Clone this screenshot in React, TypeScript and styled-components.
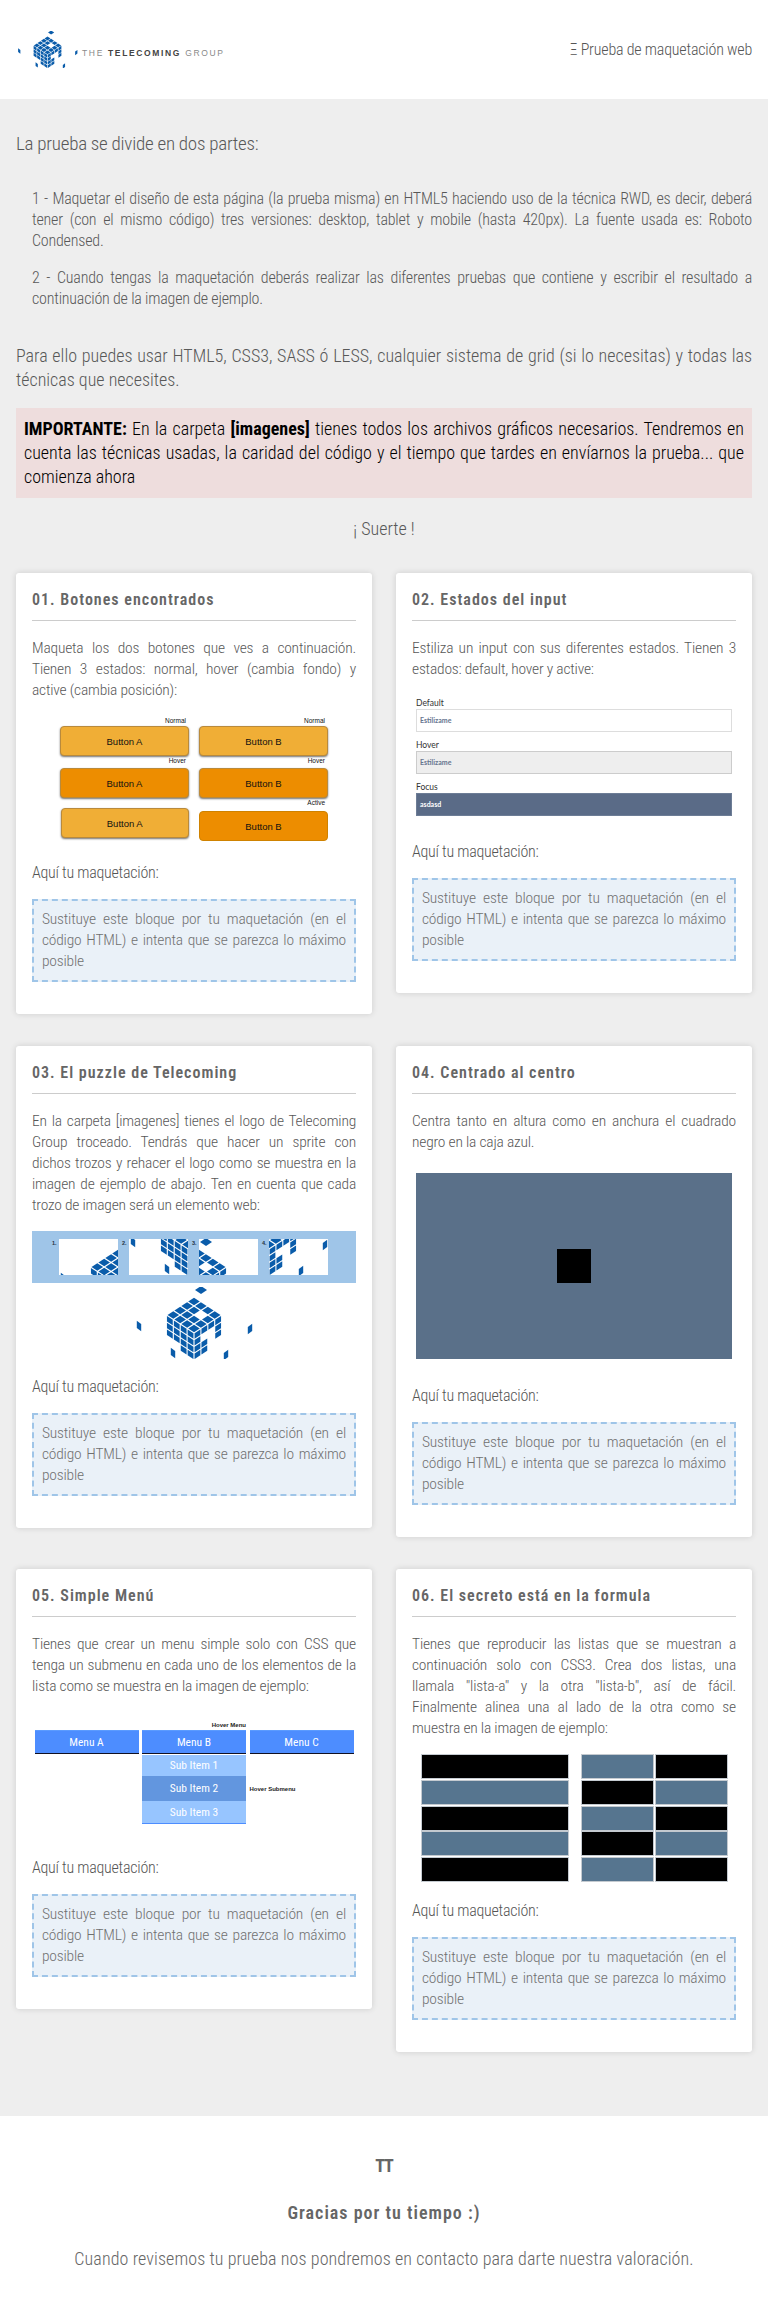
import React from 'react';
import styled, { createGlobalStyle } from 'styled-components';

/*
 * Types
 */
type ButtonState = 'normal' | 'hover' | 'active';
type Point = [number, number];

/*
 * Logo geometry
 */
const R: Point = [6.9, 4.5];
const L: Point = [-6.9, 4.5];
const UP: Point = [6.9, -4.5];
const D: Point = [0, 6.75];

const face = (origin: Point, a: Point, b: Point, missing: string[]) => {
    const cells: string[] = [];
    for (let i = 0; i < 4; i++) {
        for (let j = 0; j < 4; j++) {
            if (missing.includes(`${i},${j}`)) continue;
            const p = (u: number, v: number) =>
                `${origin[0] + (i + u) * a[0] + (j + v) * b[0]},${origin[1] + (i + u) * a[1] + (j + v) * b[1]}`;
            cells.push([p(0.08, 0.08), p(0.92, 0.08), p(0.92, 0.92), p(0.08, 0.92)].join(' '));
        }
    }
    return cells;
};

const loose = (c: Point, a: Point, b: Point) =>
    [
        `${c[0] - a[0] - b[0]},${c[1] - a[1] - b[1]}`,
        `${c[0] + a[0] - b[0]},${c[1] + a[1] - b[1]}`,
        `${c[0] + a[0] + b[0]},${c[1] + a[1] + b[1]}`,
        `${c[0] - a[0] + b[0]},${c[1] - a[1] + b[1]}`,
    ].join(' ');

const logoCells = [
    ...face([0, 0], R, L, ['2,1']),
    ...face([-27.6, 18], R, D, ['0,3', '1,3']),
    ...face([0, 36], UP, D, ['1,1', '2,1', '2,2', '2,3', '3,3']),
    loose([7, -7], [3, 2], [-3, 2]),
    loose([-55, 29], [2.2, 1.6], [0, 3.6]),
    loose([56, 32], [2.2, -1.6], [0, 3.6]),
    loose([32, 58], [2.2, -1.6], [0, 3.6]),
    loose([-21, 56], [2.2, 1.6], [0, 3.6]),
];

/*
 * Styling
 */
const GlobalStyle = createGlobalStyle`
    html, body {
        margin: 0;
        padding: 0;
        background: #eeeeee;
    }
    body {
        font-family: "Roboto Condensed", Roboto, "Liberation Sans", sans-serif;
        font-stretch: 75%;
        color: #585858;
    }
    * {
        box-sizing: border-box;
    }
`;

const Header = styled.header`
    display: flex;
    align-items: center;
    justify-content: space-between;
    height: 99px;
    padding: 0 16px 0 17px;
    background: #ffffff;
`;

const Brand = styled.div`
    display: flex;
    align-items: center;
    gap: 4px;
`;

const BrandName = styled.span`
    font-family: "Liberation Sans", sans-serif;
    font-stretch: normal;
    font-size: 8.5px;
    letter-spacing: 1.65px;
    color: #8a8a8a;
    padding-top: 6px;

    b {
        color: #444444;
    }
`;

const HeaderTitle = styled.div`
    font-size: 16px;
    font-weight: 350;
    letter-spacing: -0.2px;
    color: #555555;
`;

const Main = styled.main`
    padding: 32px 16px 64px;
`;

const Lead = styled.p`
    margin: 0 0 31px;
    font-size: 19px;
    font-weight: 350;
    letter-spacing: -0.25px;
    line-height: 26px;
`;

const Steps = styled.div`
    padding-left: 16px;
`;

const Step = styled.p`
    margin: 0 0 16px;
    font-size: 16px;
    font-weight: 350;
    letter-spacing: -0.2px;
    line-height: 21px;
    text-align: justify;
`;

const Tools = styled.p`
    margin: 35px 0 16px;
    font-size: 18px;
    font-weight: 350;
    line-height: 24px;
    text-align: justify;
`;

const Notice = styled.p`
    margin: 0;
    padding: 9px 8px;
    background: #eedddd;
    color: #000000;
    font-size: 18px;
    font-weight: 350;
    line-height: 24px;
    text-align: justify;

    b {
        font-weight: 700;
    }
`;

const Luck = styled.p`
    margin: 19px 0 32px;
    font-size: 18px;
    font-weight: 350;
    line-height: 24px;
    text-align: center;
`;

const Cards = styled.div`
    display: grid;
    grid-template-columns: 356px 356px;
    column-gap: 24px;
    row-gap: 32px;
    align-items: start;
`;

const Card = styled.section`
    padding: 16px 16px 32px;
    background: #ffffff;
    border-radius: 3px;
    box-shadow: 0 0 6px rgba(0, 0, 0, 0.14);
`;

const CardTitle = styled.h2`
    margin: 0 0 17px;
    padding-bottom: 9px;
    border-bottom: 1px solid #cccccc;
    font-size: 16px;
    font-weight: 600;
    font-stretch: 100%;
    letter-spacing: 1px;
    line-height: 22px;
    color: #666666;
`;

const CardText = styled.p`
    margin: 0;
    font-size: 15.5px;
    font-weight: 350;
    letter-spacing: -0.2px;
    line-height: 21px;
    text-align: justify;
`;

const YourTurn = styled.p`
    margin: 0 0 16px;
    font-size: 16px;
    font-weight: 350;
    letter-spacing: -0.25px;
    line-height: 21px;
    color: #555555;
`;

const Placeholder = styled.div`
    padding: 8px;
    border: 2px dashed #9fc5e8;
    background: #eaf1f8;
    font-size: 15.5px;
    font-weight: 350;
    letter-spacing: -0.2px;
    line-height: 21px;
    text-align: justify;
    color: #707070;
`;

/* 01 */
const ButtonsDemo = styled.div`
    display: grid;
    grid-template-columns: 129px 129px;
    justify-content: center;
    column-gap: 10px;
    height: 161px;
    padding-top: 15px;
`;

const ButtonColumn = styled.div`
    display: flex;
    flex-direction: column;
`;

const StateLabel = styled.span<{ $height: number }>`
    height: ${(p) => p.$height}px;
    padding-right: 3px;
    font-family: "Liberation Sans", sans-serif;
    font-stretch: normal;
    font-size: 6.5px;
    line-height: 10px;
    text-align: right;
    color: #111111;
`;

const DemoButton = styled.div<{ $state: ButtonState; $pressed?: boolean }>`
    display: flex;
    align-items: center;
    justify-content: center;
    height: 30px;
    margin-left: ${(p) => (p.$pressed ? '0.5px' : '0')};
    margin-top: ${(p) => (p.$pressed ? '10px' : '0')};
    border: 1px solid ${(p) => (p.$state === 'active' ? '#cf8200' : '#b98a3c')};
    border-radius: 4px;
    background: ${(p) => (p.$state === 'normal' ? '#f0ae36' : '#ed8d00')};
    box-shadow: ${(p) => (p.$state === 'active' ? 'none' : '0 1px 2px rgba(0, 0, 0, 0.55)')};
    font-family: "Liberation Sans", sans-serif;
    font-stretch: normal;
    font-size: 9.5px;
    color: #111111;
`;

/* 02 */
const InputsDemo = styled.div`
    display: flex;
    flex-direction: column;
    gap: 8px;
    height: 161px;
    padding: 18px 4px 0;
`;

const InputGroup = styled.div`
    display: flex;
    flex-direction: column;
`;

const InputLabel = styled.label`
    height: 11px;
    font-family: Lato, sans-serif;
    font-stretch: normal;
    font-size: 8.5px;
    line-height: 10px;
    color: #333333;
`;

const FakeInput = styled.div<{ $bg: string; $border: string; $color: string }>`
    height: 23px;
    padding: 0 3px;
    border: 1.5px solid ${(p) => p.$border};
    background: ${(p) => p.$bg};
    font-family: Lato, sans-serif;
    font-stretch: normal;
    font-size: 7px;
    font-weight: 700;
    line-height: 20px;
    color: ${(p) => p.$color};
`;

/* 03 */
const SpriteBand = styled.div`
    display: flex;
    gap: 4px;
    height: 52px;
    margin-top: 15px;
    padding: 8px 0 0 20px;
    background: #9fc5e8;
`;

const Sprite = styled.div`
    display: flex;
    width: 66px;
`;

const SpriteNumber = styled.span`
    width: 7px;
    font-family: "Liberation Sans", sans-serif;
    font-stretch: normal;
    font-size: 5.5px;
    font-weight: 700;
    line-height: 8px;
    color: #223344;
`;

const SpriteTile = styled.svg`
    display: block;
    width: 59px;
    height: 36px;
    background: #ffffff;
`;

const PuzzleLogo = styled.svg`
    display: block;
    width: 118px;
    height: 72px;
    margin: 4px auto 17px;
`;

/* 04 */
const CenterBox = styled.div`
    display: flex;
    align-items: center;
    justify-content: center;
    height: 186px;
    margin: 20px 4px 26px;
    background: #5a7089;
`;

const CenterSquare = styled.div`
    width: 34px;
    height: 34px;
    background: #000000;
`;

/* 05 */
const MenuDemo = styled.div`
    display: grid;
    grid-template-columns: repeat(3, 104px);
    grid-template-rows: 11px 24px auto;
    justify-content: center;
    align-content: start;
    column-gap: 3.5px;
    height: 160px;
    padding-top: 22px;
`;

const MenuNote = styled.span<{ $col: number; $left?: boolean }>`
    grid-column: ${(p) => p.$col};
    align-self: center;
    font-family: "Liberation Sans", sans-serif;
    font-stretch: normal;
    font-size: 6px;
    font-weight: 700;
    color: #222222;
    text-align: ${(p) => (p.$left ? 'left' : 'right')};
`;

const MenuItem = styled.div<{ $col: number }>`
    grid-column: ${(p) => p.$col};
    grid-row: 2;
    height: 24px;
    border-top: 1px solid #5b9bff;
    border-bottom: 1.5px solid #111122;
    background: #4d8dff;
    color: #ffffff;
    font-size: 11.5px;
    line-height: 22px;
    text-align: center;
`;

const SubMenu = styled.div`
    grid-column: 2;
    margin-top: 1px;
    border-bottom: 1px solid #4d8dff;
`;

const SubItem = styled.div<{ $hover?: boolean; $height: number }>`
    height: ${(p) => p.$height}px;
    background: ${(p) => (p.$hover ? '#6296df' : '#97c5ff')};
    color: #ffffff;
    font-size: 11.5px;
    line-height: ${(p) => p.$height}px;
    text-align: center;
`;

/* 06 */
const ListsDemo = styled.div`
    display: flex;
    justify-content: center;
    gap: 14px;
    height: 161px;
    padding-top: 16px;
`;

const List = styled.div<{ $cols: number }>`
    display: grid;
    grid-template-columns: repeat(${(p) => p.$cols}, ${(p) => (p.$cols === 1 ? '146px' : '71px')});
    grid-auto-rows: 23px;
    gap: 2.75px 3px;
    align-content: start;
`;

const ListRow = styled.div<{ $dark: boolean }>`
    background: ${(p) => (p.$dark ? '#000000' : '#56758f')};
    box-shadow: 0 0 0 1px #c4cad0;
`;

const Footer = styled.footer`
    height: 204px;
    padding-top: 36px;
    background: #ffffff;
    color: #666666;
    text-align: center;
`;

const FooterIcon = styled.div`
    margin-bottom: 20px;
    font-size: 18px;
    font-weight: 700;
    letter-spacing: -1px;
    line-height: 28px;
`;

const FooterTitle = styled.h3`
    margin: 0 0 20px;
    font-size: 18px;
    font-weight: 600;
    font-stretch: 100%;
    letter-spacing: 1px;
    line-height: 26px;
`;

const FooterText = styled.p`
    margin: 0;
    font-size: 18px;
    font-weight: 350;
    letter-spacing: 0.1px;
    line-height: 26px;
`;

/*
 * Components
 */
const LogoShapes = () => (
    <g fill="#0a5caa">
        {logoCells.map((points, index) => (
            <polygon key={index} points={points} />
        ))}
    </g>
);

const PLACEHOLDER = 'Sustituye este bloque por tu maquetación (en el código HTML) e intenta que se parezca lo máximo posible';

const Answer = () => (
    <>
        <YourTurn>Aquí tu maquetación:</YourTurn>
        <Placeholder>{PLACEHOLDER}</Placeholder>
    </>
);

const tiles = [
    { n: '1.', box: '-59 -10 59 36' },
    { n: '2.', box: '-59 26 59 36' },
    { n: '3.', box: '0 -10 59 36' },
    { n: '4.', box: '0 26 59 36' },
];

const listA = [true, false, true, false, true];
const listB = [false, true, true, false, false, true, true, false, false, true];

const App: React.FC = () => (
    <>
        <GlobalStyle />
        <Header>
            <Brand>
                <svg width="61" height="37" viewBox="-59 -10 118 72">
                    <LogoShapes />
                </svg>
                <BrandName>
                    THE <b>TELECOMING</b> GROUP
                </BrandName>
            </Brand>
            <HeaderTitle>Ξ Prueba de maquetación web</HeaderTitle>
        </Header>

        <Main>
            <Lead>La prueba se divide en dos partes:</Lead>
            <Steps>
                <Step>
                    1 - Maquetar el diseño de esta página (la prueba misma) en HTML5 haciendo uso de la técnica RWD, es decir, deberá tener (con el mismo código) tres versiones: desktop, tablet y mobile (hasta 420px). La fuente usada es: Roboto Condensed.
                </Step>
                <Step>
                    2 - Cuando tengas la maquetación deberás realizar las diferentes pruebas que contiene y escribir el resultado a continuación de la imagen de ejemplo.
                </Step>
            </Steps>
            <Tools>
                Para ello puedes usar HTML5, CSS3, SASS ó LESS, cualquier sistema de grid (si lo necesitas) y todas las técnicas que necesites.
            </Tools>
            <Notice>
                <b>IMPORTANTE:</b> En la carpeta <b>[imagenes]</b> tienes todos los archivos gráficos necesarios. Tendremos en cuenta las técnicas usadas, la caridad del código y el tiempo que tardes en envíarnos la prueba... que comienza ahora
            </Notice>
            <Luck>¡ Suerte !</Luck>

            <Cards>
                <Card>
                    <CardTitle>01. Botones encontrados</CardTitle>
                    <CardText>
                        Maqueta los dos botones que ves a continuación. Tienen 3 estados: normal, hover (cambia fondo) y active (cambia posición):
                    </CardText>
                    <ButtonsDemo>
                        <ButtonColumn>
                            <StateLabel $height={10}>Normal</StateLabel>
                            <DemoButton $state="normal">Button A</DemoButton>
                            <StateLabel $height={12}>Hover</StateLabel>
                            <DemoButton $state="hover">Button A</DemoButton>
                            <DemoButton $state="normal" $pressed>Button A</DemoButton>
                        </ButtonColumn>
                        <ButtonColumn>
                            <StateLabel $height={10}>Normal</StateLabel>
                            <DemoButton $state="normal">Button B</DemoButton>
                            <StateLabel $height={12}>Hover</StateLabel>
                            <DemoButton $state="hover">Button B</DemoButton>
                            <StateLabel $height={13}>Active</StateLabel>
                            <DemoButton $state="active">Button B</DemoButton>
                        </ButtonColumn>
                    </ButtonsDemo>
                    <Answer />
                </Card>

                <Card>
                    <CardTitle>02. Estados del input</CardTitle>
                    <CardText>
                        Estiliza un input con sus diferentes estados. Tienen 3 estados: default, hover y active:
                    </CardText>
                    <InputsDemo>
                        <InputGroup>
                            <InputLabel>Default</InputLabel>
                            <FakeInput $bg="#ffffff" $border="#dddddd" $color="#66758f">Estilizame</FakeInput>
                        </InputGroup>
                        <InputGroup>
                            <InputLabel>Hover</InputLabel>
                            <FakeInput $bg="#eeeeee" $border="#cccccc" $color="#66758f">Estilizame</FakeInput>
                        </InputGroup>
                        <InputGroup>
                            <InputLabel>Focus</InputLabel>
                            <FakeInput $bg="#5a6b87" $border="#6d7d96" $color="#ffffff">asdasd</FakeInput>
                        </InputGroup>
                    </InputsDemo>
                    <Answer />
                </Card>

                <Card>
                    <CardTitle>03. El puzzle de Telecoming</CardTitle>
                    <CardText>
                        En la carpeta [imagenes] tienes el logo de Telecoming Group troceado. Tendrás que hacer un sprite con dichos trozos y rehacer el logo como se muestra en la imagen de ejemplo de abajo. Ten en cuenta que cada trozo de imagen será un elemento web:
                    </CardText>
                    <SpriteBand>
                        {tiles.map((tile) => (
                            <Sprite key={tile.n}>
                                <SpriteNumber>{tile.n}</SpriteNumber>
                                <SpriteTile viewBox={tile.box}>
                                    <LogoShapes />
                                </SpriteTile>
                            </Sprite>
                        ))}
                    </SpriteBand>
                    <PuzzleLogo viewBox="-59 -10 118 72">
                        <LogoShapes />
                    </PuzzleLogo>
                    <Answer />
                </Card>

                <Card>
                    <CardTitle>04. Centrado al centro</CardTitle>
                    <CardText>
                        Centra tanto en altura como en anchura el cuadrado negro en la caja azul.
                    </CardText>
                    <CenterBox>
                        <CenterSquare />
                    </CenterBox>
                    <Answer />
                </Card>

                <Card>
                    <CardTitle>05. Simple Menú</CardTitle>
                    <CardText>
                        Tienes que crear un menu simple solo con CSS que tenga un submenu en cada uno de los elementos de la lista como se muestra en la imagen de ejemplo:
                    </CardText>
                    <MenuDemo>
                        <MenuNote $col={2}>Hover Menu</MenuNote>
                        <MenuItem $col={1}>Menu A</MenuItem>
                        <MenuItem $col={2}>Menu B</MenuItem>
                        <MenuItem $col={3}>Menu C</MenuItem>
                        <SubMenu>
                            <SubItem $height={21}>Sub Item 1</SubItem>
                            <SubItem $height={25} $hover>Sub Item 2</SubItem>
                            <SubItem $height={22}>Sub Item 3</SubItem>
                        </SubMenu>
                        <MenuNote $col={3} $left>Hover Submenu</MenuNote>
                    </MenuDemo>
                    <Answer />
                </Card>

                <Card>
                    <CardTitle>06. El secreto está en la formula</CardTitle>
                    <CardText>
                        Tienes que reproducir las listas que se muestran a continuación solo con CSS3. Crea dos listas, una llamala "lista-a" y la otra "lista-b", así de fácil. Finalmente alinea una al lado de la otra como se muestra en la imagen de ejemplo:
                    </CardText>
                    <ListsDemo>
                        <List $cols={1}>
                            {listA.map((dark, index) => (
                                <ListRow key={index} $dark={dark} />
                            ))}
                        </List>
                        <List $cols={2}>
                            {listB.map((dark, index) => (
                                <ListRow key={index} $dark={dark} />
                            ))}
                        </List>
                    </ListsDemo>
                    <Answer />
                </Card>
            </Cards>
        </Main>

        <Footer>
            <FooterIcon>TT</FooterIcon>
            <FooterTitle>Gracias por tu tiempo :)</FooterTitle>
            <FooterText>Cuando revisemos tu prueba nos pondremos en contacto para darte nuestra valoración.</FooterText>
        </Footer>
    </>
);

export default App;
